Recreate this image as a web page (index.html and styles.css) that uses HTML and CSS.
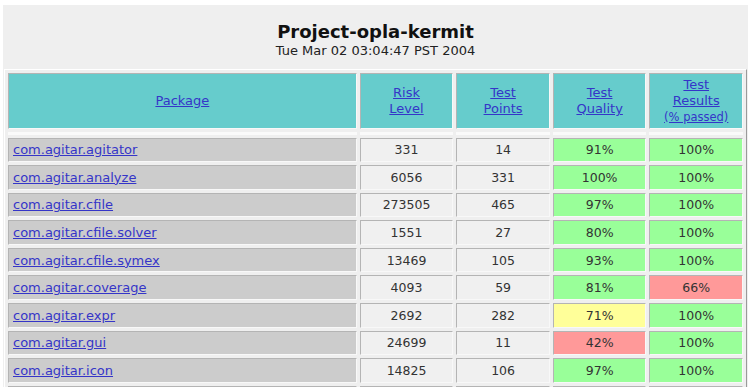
FILE: index.html
```html
<!DOCTYPE html>
<html>
<head>
<meta charset="utf-8">
<title>Project-opla-kermit</title>
<link rel="stylesheet" href="styles.css">
</head>
<body>
<div class="page">
  <div class="heading">
    <h1 class="title">Project-opla-kermit</h1>
    <div class="date">Tue Mar 02 03:04:47 PST 2004</div>
  </div>
  <table class="report">
    <thead>
      <tr>
        <th class="col-pkg"><a href="#">Package</a></th>
        <th class="col-num"><a href="#">Risk<br>Level</a></th>
        <th class="col-num"><a href="#">Test<br>Points</a></th>
        <th class="col-num"><a href="#">Test<br>Quality</a></th>
        <th class="col-num"><a href="#">Test<br>Results<br><span class="small">(% passed)</span></a></th>
      </tr>
    </thead>
    <tbody>
      <tr class="spacer"><td></td><td></td><td></td><td></td><td></td></tr>
      <tr><td class="pkg"><a href="#">com.agitar.agitator</a></td><td class="num">331</td><td class="num">14</td><td class="good">91%</td><td class="good">100%</td></tr>
      <tr><td class="pkg"><a href="#">com.agitar.analyze</a></td><td class="num">6056</td><td class="num">331</td><td class="good">100%</td><td class="good">100%</td></tr>
      <tr><td class="pkg"><a href="#">com.agitar.cfile</a></td><td class="num">273505</td><td class="num">465</td><td class="good">97%</td><td class="good">100%</td></tr>
      <tr><td class="pkg"><a href="#">com.agitar.cfile.solver</a></td><td class="num">1551</td><td class="num">27</td><td class="good">80%</td><td class="good">100%</td></tr>
      <tr><td class="pkg"><a href="#">com.agitar.cfile.symex</a></td><td class="num">13469</td><td class="num">105</td><td class="good">93%</td><td class="good">100%</td></tr>
      <tr><td class="pkg"><a href="#">com.agitar.coverage</a></td><td class="num">4093</td><td class="num">59</td><td class="good">81%</td><td class="bad">66%</td></tr>
      <tr><td class="pkg"><a href="#">com.agitar.expr</a></td><td class="num">2692</td><td class="num">282</td><td class="warn">71%</td><td class="good">100%</td></tr>
      <tr><td class="pkg"><a href="#">com.agitar.gui</a></td><td class="num">24699</td><td class="num">11</td><td class="bad">42%</td><td class="good">100%</td></tr>
      <tr><td class="pkg"><a href="#">com.agitar.icon</a></td><td class="num">14825</td><td class="num">106</td><td class="good">97%</td><td class="good">100%</td></tr>
      <tr><td class="pkg"></td><td class="num"></td><td class="num"></td><td class="good"></td><td class="good"></td></tr>
    </tbody>
  </table>
</div>
</body>
</html>
```
FILE: styles.css
```css
html, body {
  margin: 0;
  padding: 0;
  background: #ffffff;
}

body {
  font-family: "DejaVu Sans", Verdana, sans-serif;
  color: #333333;
  overflow: hidden;
}

.page {
  margin: 5px 3px 0 3px;
  width: 745px;
  background: #efefef;
}

.heading {
  height: 64px;
  text-align: center;
  box-sizing: border-box;
  padding-top: 16px;
}

.title {
  margin: 0;
  font-size: 18px;
  line-height: 22px;
  font-weight: bold;
  color: #111111;
}

.date {
  font-size: 13px;
  line-height: 16px;
  color: #222222;
}

a {
  color: #3535c8;
  text-decoration: underline;
}

.report {
  margin-left: 1px;
  width: 743px;
  table-layout: fixed;
  border-collapse: separate;
  border-spacing: 3px 3px;
  border: 1px solid;
  border-color: #ffffff #9a9a9a #9a9a9a #ffffff;
}

.report th,
.report td {
  box-sizing: border-box;
  border: 1px solid;
  border-color: #b4b4b4 #f8f8f8 #f8f8f8 #b4b4b4;
  padding: 0;
}

.report th {
  height: 56px;
  background: #66cccc;
  font-weight: normal;
  font-size: 13px;
  line-height: 16px;
  text-align: center;
  vertical-align: middle;
}

.col-pkg {
  width: 348.5px;
}

.col-num {
  width: 93.5px;
}

.small {
  font-size: 11.5px;
}

.report .spacer td {
  height: 2.5px;
  border: 0;
  padding: 0;
  background: #fafafa;
}

.report td {
  height: 24.6px;
  font-size: 12.5px;
  text-align: center;
  vertical-align: middle;
  background: #f0f0f0;
}

.report td.pkg {
  text-align: left;
  padding-left: 4px;
  background: #cccccc;
  font-size: 13px;
}

.report td.good {
  background: #99ff99;
}

.report td.warn {
  background: #ffff99;
}

.report td.bad {
  background: #ff9999;
}
```
